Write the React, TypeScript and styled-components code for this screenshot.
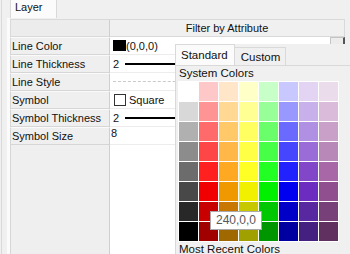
import React from "react";
import styled, { createGlobalStyle } from "styled-components";

const GlobalStyle = createGlobalStyle`
  html, body { margin: 0; padding: 0; background: #f0f0f0; }
  body { font-family: "Liberation Sans", Arial, sans-serif; font-size: 11px; color: #000; }
`;

const Window = styled.div`
  position: relative;
  width: 350px;
  height: 254px;
  overflow: hidden;
  background: #f0f0f0;
  padding-left: 1px;
  box-sizing: border-box;
  display: flex;
`;

const Frame = styled.div`
  flex: 1;
  border-left: 1px solid #d9d9d9;
  padding-left: 5px;
  display: flex;
  flex-direction: column;
`;

const TabStrip = styled.div`
  height: 18px;
  padding-left: 3px;
  display: flex;
  align-items: stretch;
`;

const PageTab = styled.div`
  width: 41px;
  background: #fbfbfb;
  border: 1px solid #d9d9d9;
  border-top: none;
  border-bottom: none;
  padding-left: 4px;
  line-height: 15px;
  color: #111;
`;

const Page = styled.div`
  flex: 1;
  border-left: 3px solid #fbfbfb;
  padding-top: 1px;
  padding-right: 5px;
  display: flex;
`;

const PropGrid = styled.div`
  flex: 1;
  display: grid;
  grid-template-columns: 100px 1fr;
  grid-template-rows: repeat(7, 18px) 1fr;
`;

const HeadLabel = styled.div`
  background: #ececec;
  border: 1px solid #d9d9d9;
  border-right-color: #cfcfcf;
`;

const HeadValue = styled.div`
  background: #f0f0f0;
  border: 1px solid #d9d9d9;
  border-left: none;
  display: flex;
  align-items: center;
  justify-content: center;
  color: #111;
`;

const Label = styled.div`
  background: #efefef;
  border: 1px solid #d6d6d6;
  border-top-color: #fafafa;
  border-right-color: #cfcfcf;
  padding-left: 1px;
  display: flex;
  align-items: center;
  color: #111;
  white-space: nowrap;
`;

const Value = styled.div<{ $top?: boolean }>`
  background: #fff;
  border-bottom: 1px solid #ececec;
  display: flex;
  align-items: ${(p) => (p.$top ? "flex-start" : "center")};
  padding-left: ${(p) => (p.$top ? 1 : 3)}px;
  gap: 3px;
  white-space: nowrap;
  overflow: hidden;
  color: #111;
`;

const FillLabel = styled.div`
  background: #efefef;
  border-left: 1px solid #d6d6d6;
  border-right: 1px solid #cfcfcf;
`;

const FillValue = styled.div`
  background: #fff;
`;

const Swatch = styled.span<{ $color: string }>`
  width: 13px;
  height: 11px;
  margin-right: -3px;
  background: ${(p) => p.$color};
  flex: none;
`;

const DropButton = styled.div`
  margin-left: auto;
  align-self: flex-start;
  width: 15px;
  height: 16px;
  background: #ececec;
  border: 1px solid #c4c4c4;
  border-right: 2px solid #555;
  display: flex;
  justify-content: center;
  padding-top: 6px;
  box-sizing: border-box;
  &::before {
    content: "";
    width: 5px;
    height: 2px;
    background: #222;
  }
`;

const StrokeLine = styled.span<{ $dashed?: boolean }>`
  flex: 1;
  height: ${(p) => (p.$dashed ? 0 : 2)}px;
  background: ${(p) => (p.$dashed ? "transparent" : "#000")};
  border-top: ${(p) => (p.$dashed ? "1px dashed #c9c9c9" : "none")};
  margin-left: ${(p) => (p.$dashed ? 0 : 3)}px;
`;

const CheckBox = styled.span`
  width: 10px;
  height: 10px;
  border: 1px solid #333;
  margin-left: 1px;
  flex: none;
`;

const Popup = styled.div`
  position: absolute;
  left: 175px;
  top: 44px;
  width: 180px;
  height: 215px;
  background: #f0f0f0;
  display: flex;
  flex-direction: column;
`;

const PopTabs = styled.div`
  height: 21px;
  display: flex;
  align-items: flex-end;
`;

const PopTab = styled.div<{ $active?: boolean }>`
  height: ${(p) => (p.$active ? 21 : 18)}px;
  padding: 0 ${(p) => (p.$active ? 6 : 5)}px 0 ${(p) => (p.$active ? 5 : 6)}px;
  background: ${(p) => (p.$active ? "#fbfbfb" : "#f0f0f0")};
  border: 1px solid #d9d9d9;
  border-bottom: none;
  border-left: ${(p) => (p.$active ? "1px solid #d9d9d9" : "none")};
  box-sizing: border-box;
  display: flex;
  align-items: center;
  font-size: 11.5px;
  color: #111;
`;

const Panel = styled.div`
  flex: 1;
  border-top: 1px solid #d9d9d9;
  border-left: 1px solid #d9d9d9;
  padding-left: 2px;
  display: flex;
  flex-direction: column;
`;

const SectionLabel = styled.div`
  height: 15px;
  line-height: 15px;
  white-space: nowrap;
  padding-left: 1px;
  font-size: 11.5px;
  color: #111;
`;

const ColorGrid = styled.div`
  align-self: flex-start;
  display: grid;
  grid-template-columns: repeat(8, 19px);
  grid-auto-rows: 19px;
  gap: 1px;
  padding: 1px;
  background: #fff;
`;

const Cell = styled.div<{ $color: string }>`
  background: ${(p) => p.$color};
`;

const Tip = styled.div`
  position: absolute;
  left: 35px;
  top: 167px;
  height: 19px;
  padding: 0 5px;
  box-sizing: border-box;
  background: #fff;
  border: 1px solid #a9a9a9;
  color: #575757;
  font-size: 12px;
  line-height: 17px;
`;

const colors = [
  ["#ffffff", "#ffc8c8", "#ffe6c8", "#ffffc8", "#c8ffc8", "#c8c8ff", "#e2d4f2", "#eadcea"],
  ["#d8d8d8", "#ff9494", "#ffd894", "#ffff94", "#98ff98", "#9898ff", "#c8b0ea", "#dabcda"],
  ["#b0b0b0", "#ff6a6a", "#ffc868", "#ffff62", "#6aff6a", "#6a6aff", "#b090e2", "#c8a0c8"],
  ["#8c8c8c", "#ff4646", "#ffb848", "#ffff46", "#46ff46", "#4646ff", "#9a6cd8", "#b888b8"],
  ["#6c6c6c", "#ff2020", "#ffa822", "#ffff26", "#22ff22", "#2222ff", "#8246c8", "#a868a8"],
  ["#484848", "#f00000", "#f09800", "#f0f000", "#00f000", "#0000f0", "#6c2cc0", "#905090"],
  ["#282828", "#c80000", "#c87800", "#c8c800", "#00c800", "#0000c8", "#5828a0", "#784078"],
  ["#000000", "#a00000", "#a06800", "#a0a000", "#009600", "#0000a0", "#442080", "#603060"],
];

export default function App() {
  return (
    <>
      <GlobalStyle />
      <Window>
        <Frame>
          <TabStrip>
            <PageTab>Layer</PageTab>
          </TabStrip>
          <Page>
            <PropGrid>
              <HeadLabel />
              <HeadValue>Filter by Attribute</HeadValue>

              <Label>Line Color</Label>
              <Value>
                <Swatch $color="#000" />
                (0,0,0)
                <DropButton />
              </Value>

              <Label>Line Thickness</Label>
              <Value>
                2<StrokeLine />
              </Value>

              <Label>Line Style</Label>
              <Value>
                <StrokeLine $dashed />
              </Value>

              <Label>Symbol</Label>
              <Value>
                <CheckBox />
                Square
              </Value>

              <Label>Symbol Thickness</Label>
              <Value>
                2<StrokeLine />
              </Value>

              <Label>Symbol Size</Label>
              <Value $top>8</Value>

              <FillLabel />
              <FillValue />
            </PropGrid>
          </Page>
        </Frame>

        <Popup>
          <PopTabs>
            <PopTab $active>Standard</PopTab>
            <PopTab>Custom</PopTab>
          </PopTabs>
          <Panel>
            <SectionLabel>System Colors</SectionLabel>
            <ColorGrid>
              {colors.flat().map((c, i) => (
                <Cell key={i} $color={c} />
              ))}
            </ColorGrid>
            <SectionLabel>Most Recent Colors</SectionLabel>
          </Panel>
          <Tip>240,0,0</Tip>
        </Popup>
      </Window>
    </>
  );
}
